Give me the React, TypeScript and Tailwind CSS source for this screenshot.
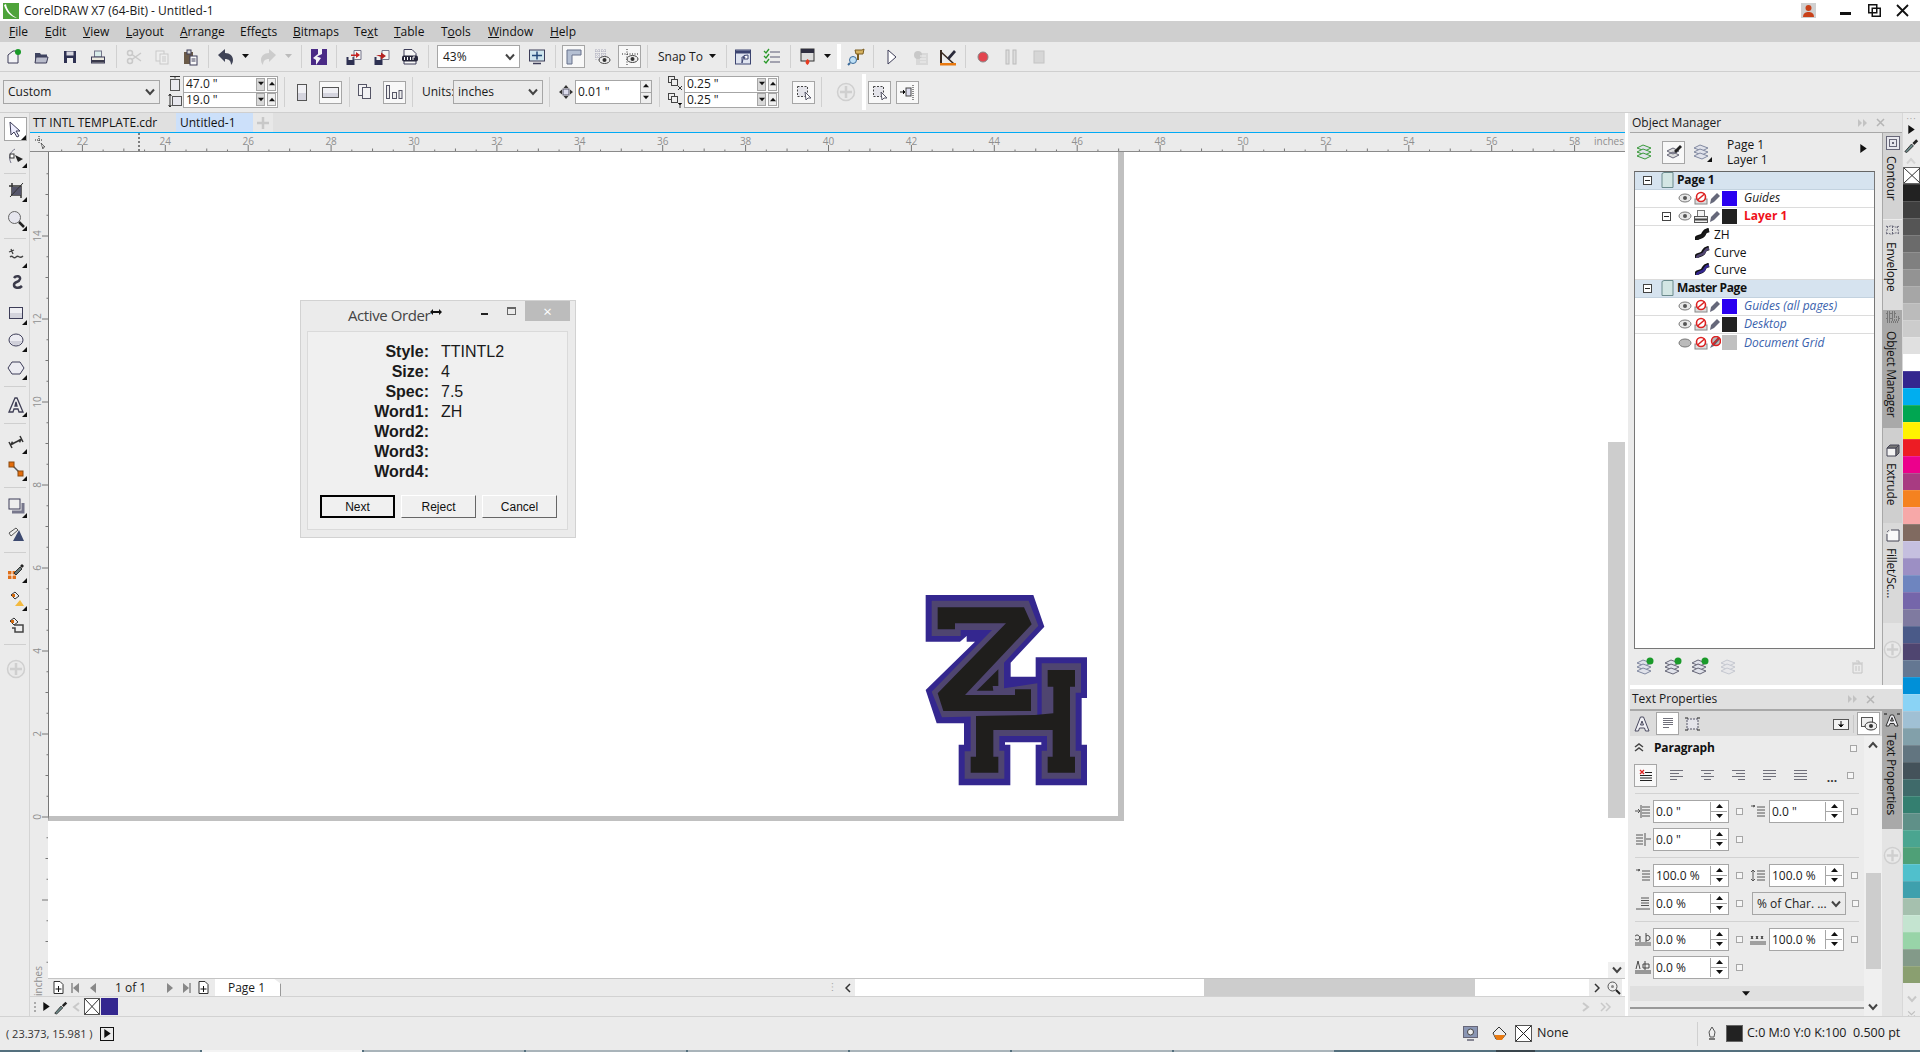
import React from "react";

type P = { children?: React.ReactNode; w?: number; h?: number; className?: string };
const S = ({ children, w = 18, h = 18, className }: P) => (
  <svg width={w} height={h} viewBox={`0 0 ${w} ${h}`} className={className} fill="none">{children}</svg>
);
const N = "#3d3d58";
const G = "#75758a";
const D = "#c9c9c9";
const Tri = ({ dir = "down", c = "#111", s = 7 }: { dir?: string; c?: string; s?: number }) => {
  const pts: Record<string, string> = { down: "0,1 7,1 3.5,5", up: "0,5 7,5 3.5,1", right: "1,0 6,3.5 1,7", left: "6,0 1,3.5 6,7" };
  return <svg width={s} height={s} viewBox="0 0 7 7"><polygon points={pts[dir]} fill={c} /></svg>;
};
const Corner = () => <svg width="5" height="5" viewBox="0 0 5 5" className="absolute right-0 bottom-0"><polygon points="5,0 5,5 0,5" fill="#111" /></svg>;

const INew = () => <S><path d="M3 7 L8 3 H13 V15 H3Z" fill="#f2f2f5" stroke={N} /><circle cx="13" cy="4" r="3" fill="#1a9a2a" /></S>;
const IOpen = () => <S><path d="M2 5h5l1 1.500h6V15H2Z" fill="#3f4460" /><path d="M3 9h12l-1.500 6H2Z" fill="#b9bccb" stroke={N} /></S>;
const ISave = () => <S><rect x="3" y="3" width="12" height="12" fill="#2e3152" /><rect x="5.500" y="3.500" width="7" height="4" fill="#d8d8e0" /><rect x="6" y="10" width="6" height="5" fill="#eee" /></S>;
const IPrint = () => <S><rect x="5.500" y="3" width="7" height="6" fill="#d9ecea" stroke={G} /><rect x="2.500" y="9" width="13" height="6" fill="#eceae0" stroke={N} /><rect x="3" y="12" width="12" height="2.500" fill="#3a3a4c" /></S>;
const ICut = () => <S><circle cx="5" cy="13" r="2.500" stroke={D} strokeWidth="1.500" /><circle cx="5" cy="5" r="2.500" stroke={D} strokeWidth="1.500" /><path d="M7 6.500 16 13M7 11.500 16 5" stroke={D} strokeWidth="1.500" /></S>;
const ICopy = () => <S><rect x="3" y="3" width="8" height="10" fill="#eee" stroke={D} /><rect x="7" y="6" width="8" height="10" fill="#eee" stroke={D} /><path d="M9 9h4M9 11h4M9 13h4" stroke={D} /></S>;
const IPaste = () => <S><rect x="3" y="4" width="9" height="12" fill="#6a5a48" /><rect x="6" y="2" width="4" height="4" fill="#d8d8d8" stroke={N} /><rect x="9" y="8" width="7" height="9" fill="#fafafa" stroke={N} /><path d="M10.500 11h4M10.500 13h4" stroke={N} /></S>;
const IUndo = ({ c = "#3f4356", flip = false }: { c?: string; flip?: boolean }) => (
  <svg width="18" height="18" viewBox="0 0 18 18" style={flip ? { transform: "scaleX(-1)" } : undefined}><path d="M1 7 8 1V5c5 0 8 3 8 7 0 2-1 4-2 5 0-4-2-6-6-6v3Z" fill={c} /></svg>
);
const ICorel = () => <S><rect x="1" y="1" width="16" height="16" fill="#4a2a86" /><path d="M12 1v5L7 8.500 11 10 6 17V12L3 10l5-4V1Z" fill="#f4f4f8" /></S>;
const IImp = ({ alt = false }: { alt?: boolean }) => (
  <S><rect x="1.500" y="9" width="8" height="8" fill="#2e3152" /><rect x="3.500" y="9" width="4" height="3" fill="#eee" /><path d="M9 2.500h7v9H9Z" fill="#f5f5f5" stroke={G} />
    {alt ? <path d="M3 7h5V4.500L13 8l-5 3.500V9" fill="#b32020" /> : <path d="M6 6.500h5V4l4 3-4 3V8H6Z" fill="#c52020" />}</S>
);
const IPdf = () => <S><path d="M3 1.500h8l4 4V16H3Z" fill="#f6f6f6" stroke={N} /><rect x="1" y="7.500" width="16" height="6" rx="2" fill="#26263a" /><path d="M3.500 9v3M6.500 9v3M9.500 9v3M12 9h2M12 9v3" stroke="#fff" /></S>;
const IFull = () => <S><rect x="1.500" y="2" width="15" height="11" fill="#cfe6ee" stroke={N} /><path d="M9 3.500v8M4 7.500h10" stroke="#234a7a" strokeWidth="1.500" /><path d="M5 15.500h8" stroke={N} strokeWidth="1.500" /></S>;
const IRuler = () => <S><path d="M2 2h14v5H7v9H2Z" fill="#b5c0d3" stroke="#66708a" /></S>;
const IEye = ({ x = 6, y = 8 }: { x?: number; y?: number }) => <g transform={`translate(${x} ${y})`}><ellipse cx="5.500" cy="4" rx="5.500" ry="3.500" fill="#eee" stroke="#444" /><circle cx="5.500" cy="4" r="2" fill="#333" /></g>;
const IGrid = () => <S><path d="M2 3h12M2 6h12M2 9h12M3 1v12M6 1v12M9 1v12M12 1v12" stroke="#aab" strokeDasharray="1 1" /><IEye /></S>;
const IGuide = () => <S><path d="M1 6h16M6 1v16" stroke="#222" strokeDasharray="1 1.500" /><IEye x={6} y={7} /></S>;
const IApp = () => <S><rect x="1.500" y="2" width="15" height="14" fill="#dfe4f0" stroke="#3c4470" /><rect x="2" y="2.500" width="14" height="3" fill="#3c4470" /><path d="M8 15V9h3l-1 2h4V7l-4 .500Z" fill="#fff" stroke="#3c4470" /></S>;
const ICheck = () => <S><path d="M7 4h10M7 9h10M7 14h10" stroke="#8a8a9c" strokeWidth="1.500" /><path d="M1 3l2 2 3-4M1 8l2 2 3-4M1 13l2 2 3-4" stroke="#2a9a2a" strokeWidth="1.300" /></S>;
const IFlash = () => <S><rect x="2" y="1" width="13" height="12" fill="#ddd" stroke="#333" /><rect x="2" y="1" width="13" height="4" fill="#2e2e40" /><path d="M8.500 11c2 1.500 3 3 0 6-3-2-2-4 0-6Z" fill="#e83a20" /></S>;
const IPin = () => <S><path d="M8 2h7l2-1-1 5H9Z" fill="#d6b260" stroke="#7a5c20" /><path d="M11 6v6" stroke="#7a5c20" strokeWidth="2" /><circle cx="6" cy="12" r="3.500" fill="#bfe0f5" stroke="#3a6a9a" /><path d="M3 15 1 17" stroke="#3a6a9a" strokeWidth="2" /></S>;
const IPlay = () => <S><path d="M5 2 L13 9 5 16Z" fill="#fff" stroke={N} /></S>;
const IMacro = () => <S><rect x="4" y="5" width="12" height="12" fill="#d8d8d8" /><circle cx="6" cy="7" r="4" fill="#c8c8c8" /><path d="M8 8h6M8 11h6M8 14h6" stroke="#eee" /></S>;
const ITri = () => <S><path d="M2 2V16H17" stroke="#3a2a20" strokeWidth="2" /><path d="M2 4 15 16H2Z" fill="none" stroke="#3a2a20" strokeWidth="1.500" /><path d="M8 10 15 2l2 2-7 8Z" fill="#2a2a3a" /><rect x="1" y="15" width="16" height="2.500" fill="#ea7a10" /></S>;
const IRec = () => <S><circle cx="9" cy="9" r="5" fill="#e3454f" stroke="#888" /></S>;
const IPause = () => <S><rect x="4" y="2" width="3" height="14" fill="#ddd" stroke="#bbb" /><rect x="11" y="2" width="3" height="14" fill="#ddd" stroke="#bbb" /></S>;
const IStop = () => <S><rect x="4" y="3" width="10" height="12" fill="#d6d6d6" stroke="#c4c4c4" /></S>;
const IPlus = ({ s = 20, c = "#cfcfcf" }: { s?: number; c?: string }) => (
  <svg width={s} height={s} viewBox="0 0 20 20"><circle cx="10" cy="10" r="8.500" fill="#e9e9e9" stroke={c} strokeWidth="1.500" /><path d="M10 4v12M4 10h12" stroke={c} strokeWidth="2.500" /></svg>
);
const Dropper = () => <S><path d="M2 16 9 8l2 2-7 7Z" fill="#6a8a8a" stroke="#333" /><path d="M10 7 14 3l2 2-4 4Z" fill="#222" /></S>;

const Slot = ({ className = "w-[28px]", children }: { className?: string; children?: React.ReactNode }) => (
  <div className={`flex items-center justify-center shrink-0 ${className}`}>{children}</div>
);
const Sep = ({ className = "h-[23px]" }: { className?: string }) => <div className={`w-px bg-[#d0d0d0] shrink-0 ${className}`} />;
const Box = ({ className = "", children }: { className?: string; children?: React.ReactNode }) => (
  <div className={`flex items-center justify-center shrink-0 w-[23px] h-[23px] border border-[#a6a6a6] bg-[#f8f8f8] ${className}`}>{children}</div>
);
const Chev = ({ c = "#444" }: { c?: string }) => <svg width="10" height="8" viewBox="0 0 10 8"><path d="M1 1.500 5 6 9 1.500" stroke={c} strokeWidth="2" fill="none" /></svg>;

const Spin2 = () => (
  <div className="flex gap-[2px] mr-[1px]">
    <div className="w-[9px] h-[13px] bg-[#d8d8d8] border border-[#a6a6a6] flex items-center justify-center"><Tri s={6} /></div>
    <div className="w-[9px] h-[13px] bg-[#eee] border border-[#a6a6a6] flex items-center justify-center"><Tri dir="up" s={6} /></div>
  </div>
);
const Double = ({ a, b, className = "" }: { a: string; b: string; className?: string }) => (
  <div className={`shrink-0 w-[95px] h-[32px] border border-[#a6a6a6] bg-white flex flex-col ${className}`}>
    {[a, b].map((t, i) => (
      <div key={i} className={`flex-1 flex items-center justify-between pl-[2px] ${i === 0 ? "border-b border-[#a6a6a6]" : ""}`}>
        <span>{t}</span><Spin2 />
      </div>
    ))}
  </div>
);

const menu: [string, string, string, string][] = [
  ["", "F", "ile", "w-[36px]"], ["", "E", "dit", "w-[38px]"], ["", "V", "iew", "w-[43px]"], ["", "L", "ayout", "w-[54px]"],
  ["", "A", "rrange", "w-[60px]"], ["Effe", "c", "ts", "w-[53px]"], ["", "B", "itmaps", "w-[61px]"], ["Te", "x", "t", "w-[40px]"],
  ["", "T", "able", "w-[47px]"], ["T", "o", "ols", "w-[47px]"], ["", "W", "indow", "w-[62px]"], ["", "H", "elp", "w-[40px]"],
];

const HRuler = () => {
  const ticks = [];
  for (let v = 20; v <= 60; v += 0.5) {
    const x = 52.4 + (v - 22) * 41.45;
    if (x < 18 || x > 1555) continue;
    const major = v % 2 === 0;
    const odd = v % 1 === 0;
    ticks.push(<line key={v} x1={x} x2={x} y1={major ? 12 : odd ? 15.5 : 16.5} y2={18} stroke="#777" />);
    if (major) ticks.push(<text key={`t${v}`} x={x} y={11.5} textAnchor="middle" fontSize="10" fill="#8f8f8f" fontFamily="'Open Sans',sans-serif">{v}</text>);
  }
  return (
    <svg width="1595" height="18" viewBox="0 0 1595 18" className="block">
      {ticks}
      <text x="1564" y="12" fontSize="10" fill="#8f8f8f" fontFamily="'Open Sans',sans-serif">inches</text>
      <line x1="109" x2="109" y1="0" y2="18" stroke="#111" strokeDasharray="2 2" />
      <path d="M5 7h8M9 3v8" stroke="#222" strokeDasharray="1 1" />
      <path d="M11 10l4 4-2 0 0 2Z" fill="#fff" stroke="#222" strokeWidth=".6" />
    </svg>
  );
};
const VRuler = () => {
  const t = [];
  for (let v = -4; v <= 18; v += 0.5) {
    const y = 84 + (14 - v) * 41.5;
    if (y < 2 || y > 815) continue;
    const major = v % 2 === 0;
    const odd = v % 1 === 0;
    t.push(<line key={v} y1={y} y2={y} x1={major ? 12 : odd ? 15.5 : 16.5} x2={18} stroke="#777" />);
    if (major && v >= 0 && v <= 14) t.push(<text key={`t${v}`} transform={`translate(11 ${y}) rotate(-90)`} textAnchor="middle" fontSize="10" fill="#8f8f8f" fontFamily="'Open Sans',sans-serif">{v}</text>);
  }
  return (
    <svg width="18" height="846" viewBox="0 0 18 846" className="block">
      {t}
      <text transform="translate(12 844) rotate(-90)" fontSize="10" fill="#8f8f8f" fontFamily="'Open Sans',sans-serif">inches</text>
    </svg>
  );
};

const T1 = () => <S><path d="M3 2l1 13 3-3 3 5 2-1-3-5h4Z" fill="#eef" stroke={N} /></S>;

const ToolBtn = ({ className = "", corner = true, children }: { className?: string; corner?: boolean; children?: React.ReactNode }) => (
  <div className={`relative flex items-center justify-center w-[23px] h-[24px] ml-[4px] shrink-0 ${className}`}>
    {children}{corner && <Corner />}
  </div>
);
const TSep = ({ className = "" }: { className?: string }) => <div className={`h-px w-[22px] ml-[4px] bg-[#cfcfcf] shrink-0 ${className}`} />;

const Toolbox = () => (
  <div className="w-[30px] shrink-0 border-r border-[#d4d4d4] flex flex-col bg-[#ebebeb] pt-[4px]">
    <ToolBtn className="bg-white border border-[#a6a6a6] h-[23px]"><T1 /></ToolBtn>
    <ToolBtn className="mt-[3px]"><S><path d="M4 16C1 10 3 5 8 2" stroke={G} /><rect x="3" y="7" width="4" height="4" fill="#fff" stroke="#333" /><path d="M8 8l8 4-5 3Z" fill="#222" /></S></ToolBtn>
    <TSep className="mt-[5px]" />
    <ToolBtn className="mt-[4px]"><S><path d="M3 5h11v9H4M5 2v12M2 5h3M14 5v12" stroke="#333" strokeWidth="1.500" /><rect x="5" y="6" width="9" height="8" fill="#55556a" /><path d="M3 16 16 2" stroke="#333" /></S></ToolBtn>
    <ToolBtn className="mt-[5px]"><S><circle cx="7.500" cy="7.500" r="6" fill="#e6e6ee" stroke="#666" /><path d="M12 12l5 5" stroke="#222" strokeWidth="2.500" /></S></ToolBtn>
    <TSep className="mt-[7px]" />
    <ToolBtn className="mt-[5px]"><S><path d="M2 5 7 3M4 2l2 5M3 10c3-3 3 3 6 0s3 3 7-1" stroke="#444" strokeWidth="1.300" /></S></ToolBtn>
    <ToolBtn className="mt-[2px]" corner={false}><S><path d="M7 5c2-3 7-2 6 1-1 4-6 2-6 6 0 3 5 4 8 1" stroke="#3a3a4a" strokeWidth="2.500" /></S></ToolBtn>
    <ToolBtn className="mt-[7px]"><S><rect x="2.500" y="3.500" width="13" height="11" fill="#eeeef2" stroke={N} /><rect x="3" y="9" width="12" height="5" fill="#d3d3dc" /></S></ToolBtn>
    <ToolBtn className="mt-[3px]"><S><ellipse cx="9" cy="9" rx="7" ry="6" fill="#ececf2" stroke={N} /><path d="M3 10h12c-1 3-3 4-6 4s-5-1-6-4Z" fill="#d0d0da" /></S></ToolBtn>
    <ToolBtn className="mt-[4px]"><S><path d="M5 3h8l4 6-4 6H5L1 9Z" fill="#ececf2" stroke={N} /></S></ToolBtn>
    <TSep className="mt-[6px]" />
    <ToolBtn className="mt-[6px]"><S><path d="M2 16 8 2h2l6 14h-4l-1-3H7l-1 3ZM8 10h2L9 6Z" fill="#eee" stroke="#3f3f55" strokeWidth="1.300" /></S></ToolBtn>
    <TSep className="mt-[6px]" />
    <ToolBtn className="mt-[6px]"><S><path d="M3 12 15 6M2 9l3 6M13 3l3 6" stroke="#333" strokeWidth="1.500" /><path d="M3 12l4-1-2-3ZM15 6l-4 1 2 3Z" fill="#333" /></S></ToolBtn>
    <ToolBtn className="mt-[3px]"><S><path d="M5 5 13 13" stroke="#555" strokeWidth="1.500" /><rect x="2" y="2" width="5" height="5" fill="#e46c0a" stroke="#8a4a10" /><rect x="11" y="11" width="5" height="5" fill="#e46c0a" stroke="#8a4a10" /></S></ToolBtn>
    <TSep className="mt-[6px]" />
    <ToolBtn className="mt-[6px]"><S><rect x="2" y="2" width="11" height="10" fill="#eee" stroke={N} /><path d="M5 15h11V6" stroke="#77778c" strokeWidth="3" /></S></ToolBtn>
    <ToolBtn className="mt-[4px]" corner={false}><S><path d="M2 8 9 3l2 2-7 6Z" fill="#eee" stroke="#555" /><path d="M6 16l6-11 5 11Z" fill="#3d4a70" /></S></ToolBtn>
    <TSep className="mt-[6px]" />
    <ToolBtn className="mt-[6px]"><S><rect x="1" y="9" width="8" height="8" fill="#e0701a" /><path d="M1 13h8M5 9v8" stroke="#fff" /><path d="M7 11 13 5l2 2-6 6Z" fill="#6a7a7a" stroke="#333" /><path d="M13 4l2-2 2 2-2 2Z" fill="#222" /></S></ToolBtn>
    <ToolBtn className="mt-[4px]"><S><path d="M4 5l4-3 4 4-4 3Z" fill="#eee" stroke="#333" /><rect x="5" y="4" width="3" height="3" fill="#d06a10" /><path d="M8 16l5-6 4 6Z" fill="#f3b93e" /></S></ToolBtn>
    <ToolBtn className="mt-[2px]" corner={false}><S><path d="M3 5l4-3 4 4-4 3Z" fill="#eee" stroke="#333" /><rect x="4" y="4" width="3" height="3" fill="#d06a10" /><path d="M7 9h9v7H8v-4H5" stroke="#444" strokeWidth="1.500" fill="#eee" /></S></ToolBtn>
    <TSep className="mt-[7px]" />
    <div className="ml-[6px] mt-[14px]"><IPlus /></div>
  </div>
);

const Tabs = () => (
  <div className="h-[20px] shrink-0 bg-[#e0e0e0] border-b border-[#00aaf5] flex items-stretch text-[#111]">
    <div className="w-[146px] pl-[3px] flex items-center">TT INTL TEMPLATE.cdr</div>
    <div className="w-[77px] pl-[4px] flex items-center bg-[#cce0fa]">Untitled-1</div>
    <div className="w-[20px] flex items-center justify-center bg-[#e8e8e8]"><svg width="12" height="12" viewBox="0 0 12 12"><path d="M6 0v12M0 6h12" stroke="#c8c8c8" strokeWidth="2.500" /></svg></div>
  </div>
);

const Logo = () => (
  <svg width="230" height="220" viewBox="0 0 690 660" className="absolute left-[852px] top-[428px]">
    <polygon fill="#34278f" points="77,45 400,45 433,140 332,248 332,290 407,290 407,232 561,232 561,354 545,354 545,494 561,494 561,616 407,616 407,494 424,494 424,487 315,487 315,494 331,494 331,616 176,616 176,494 192,494 192,430 110,430 77,330 225,185 200,185 200,168 180,185 77,185" />
    <polygon fill="#4f4570" points="95,62 386,62 415,137 312,248 312,325 412,310 412,405 126,412 95,335 276,150 182,150 182,168 95,168" />
    <polygon fill="#4f4570" points="194,596 194,514 212,514 212,405 425,405 425,340 425,250 543,250 543,338 527,338 527,512 543,512 543,596 425,596 425,512 441,512 441,468 298,468 298,512 313,512 313,596" />
    <polygon fill="#1f1e1c" points="113,82 372,82 395,133 195,345 345,345 345,328 393,328 393,393 130,393 113,340 318,130 165,130 165,148 113,148" />
    <polygon fill="#1f1e1c" points="212,578 212,530 228,530 228,408 405,405 460,400 460,320 443,320 443,270 525,270 525,320 510,320 510,530 525,530 525,578 443,578 443,530 458,530 458,450 280,450 280,530 295,530 295,578" />
    <polygon fill="#1f1e1c" points="230,332 295,268 295,318 278,318 280,332" />
  </svg>
);

const Dialog = () => (
  <div className="absolute left-[252px] top-[148px] w-[276px] h-[238px] border border-[#d2d2d2] bg-[#ebebeb] flex flex-col font-['Liberation_Sans',sans-serif]">
    <div className="relative h-[30px] shrink-0 font-['Open_Sans',sans-serif] text-[15px] text-[#444]">
      <div className="flex h-full">
        <span className="ml-[47px] mt-[7px] tracking-[-0.4px] w-[84px] whitespace-nowrap">Active Order</span>
        <svg width="12" height="8" viewBox="0 0 12 8" className="mt-[7px] -ml-[2px]"><path d="M0 4 3 1v2h6V1l3 3-3 3V5H3v2Z" fill="#111" /></svg>
        <div className="w-[7px] h-[2px] bg-[#222] ml-[39px] mt-[12px]" />
        <div className="w-[9px] h-[8px] border border-[#666] border-t-2 ml-[19px] mt-[6px]" />
        <div className="w-[45px] h-[20px] bg-[#bcbcbc] ml-[9px] flex items-center justify-center text-white text-[15px] leading-none">×</div>
      </div>
    </div>
    <div className="ml-[6px] w-[261px] h-[199px] border border-[#dadada] bg-[#f0f0f0] flex flex-col">
      <div className="pt-[10px] text-[16px] leading-[20px] text-[#1a1a1a]">
        {[["Style", "TTINTL2"], ["Size", "4"], ["Spec", "7.5"], ["Word1", "ZH"], ["Word2", ""], ["Word3", ""], ["Word4", ""]].map(([a, b]) => (
          <div key={a} className="flex h-[20px]">
            <div className="w-[121px] text-right font-bold">{a}:</div>
            <div className="ml-[12px]">{b}</div>
          </div>
        ))}
      </div>
      <div className="flex gap-[6px] ml-[12px] mt-[13px] text-[12px] text-[#111]">
        <div className="w-[75px] h-[23px] border-2 border-black bg-[#f0f0f0] flex items-center justify-center">Next</div>
        <div className="w-[75px] h-[23px] border border-[#fff] border-r-[#666] border-b-[#666] bg-[#f0f0f0] flex items-center justify-center">Reject</div>
        <div className="w-[75px] h-[23px] border border-[#fff] border-r-[#666] border-b-[#666] bg-[#f0f0f0] flex items-center justify-center">Cancel</div>
      </div>
    </div>
  </div>
);

const PageAdd = () => <svg width="11" height="13" viewBox="0 0 11 13"><path d="M1 .500h6l3 3v9H1Z" fill="#fff" stroke="#333" /><path d="M5.500 5v6M2.500 8h6" stroke="#111" /></svg>;
const NavBar = () => (
  <div className="h-[18px] shrink-0 flex items-stretch bg-[#ebebeb] border-t border-[#c4c4c4]">
    <Slot className="w-[20px]"><PageAdd /></Slot>
    <Slot className="w-[16px] ml-[-1px]"><svg width="9" height="10" viewBox="0 0 9 10"><path d="M1 0v10" stroke="#888" strokeWidth="1.500" /><polygon points="8,0 8,10 2,5" fill="#888" /></svg></Slot>
    <Slot className="w-[20px]"><svg width="7" height="10" viewBox="0 0 7 10"><polygon points="6,0 6,10 0,5" fill="#888" /></svg></Slot>
    <div className="w-[56px] flex items-center pl-[12px]">1 of 1</div>
    <Slot className="w-[20px]"><svg width="7" height="10" viewBox="0 0 7 10"><polygon points="1,0 1,10 7,5" fill="#888" /></svg></Slot>
    <Slot className="w-[14px]"><svg width="9" height="10" viewBox="0 0 9 10"><path d="M8 0v10" stroke="#888" strokeWidth="1.500" /><polygon points="1,0 1,10 7,5" fill="#888" /></svg></Slot>
    <Slot className="w-[20px]"><PageAdd /></Slot>
    <div className="w-[66px] ml-[2px] bg-white border-r border-[#999] flex items-center justify-center pr-[2px] [clip-path:polygon(0_0,90%_0,100%_30%,100%_100%,0_100%)]">Page 1</div>
    <div className="w-[556px] flex items-center justify-end"><span className="text-[#999] text-[9px] leading-none tracking-[1px] rotate-90">···</span></div>
    <Slot className="w-[14px] ml-[4px]"><svg width="6" height="10" viewBox="0 0 6 10"><path d="M5 1 1 5l4 4" stroke="#333" strokeWidth="1.500" fill="none" /></svg></Slot>
    <div className="flex-1 bg-white flex">
      <div className="w-[349px]" />
      <div className="w-[271px] bg-[#cdcdcd]" />
      <div className="flex-1" />
    </div>
    <Slot className="w-[16px]"><svg width="6" height="10" viewBox="0 0 6 10"><path d="M1 1l4 4-4 4" stroke="#333" strokeWidth="1.500" fill="none" /></svg></Slot>
    <Slot className="w-[17px]"><svg width="14" height="14" viewBox="0 0 14 14"><circle cx="5.500" cy="5.500" r="4.500" fill="#eee" stroke="#555" /><circle cx="5.500" cy="5.500" r="1.500" fill="#888" /><path d="M9 9l4 4" stroke="#222" strokeWidth="2" /></svg></Slot>
    <div className="w-[3px] bg-white" />
  </div>
);

const PaletteBar = () => (
  <div className="h-[20px] shrink-0 flex items-center bg-[#ebebeb] border-t border-[#d2d2d2]">
    <div className="ml-[4px] w-[3px] h-[10px] border-l-2 border-dotted border-[#aaa]" />
    <Slot className="w-[14px] ml-[2px]"><Tri dir="right" s={9} /></Slot>
    <Slot className="w-[16px]"><Dropper /></Slot>
    <Slot className="w-[14px]"><svg width="8" height="10" viewBox="0 0 8 10"><path d="M7 1 2 5l5 4" stroke={D} strokeWidth="2" fill="none" /></svg></Slot>
    <div className="w-[16px] h-[17px] border border-[#555] bg-white ml-[1px]"><svg width="14" height="15" viewBox="0 0 14 15"><path d="M0 0 14 15M14 0 0 15" stroke="#333" /></svg></div>
    <div className="w-[17px] h-[17px] bg-[#34278f] ml-[1px]" />
    <div className="flex-1" />
    <svg width="8" height="10" viewBox="0 0 8 10"><path d="M1 1l5 4-5 4" stroke={D} strokeWidth="2" fill="none" /></svg>
    <svg width="12" height="10" viewBox="0 0 12 10" className="ml-[10px] mr-[13px]"><path d="M1 1l4 4-4 4M6 1l4 4-4 4" stroke={D} strokeWidth="1.500" fill="none" /></svg>
  </div>
);

const Mini = ({ c = "#1a1a1a" }: { c?: string }) => <svg width="16" height="14" viewBox="0 0 16 14"><path d="M1 12c0-4 5-2 7-5s1-4 6-5" stroke="#111" strokeWidth="4.500" fill="none" /><path d="M2 12c0-4 5-2 7-5s1-4 5-4.500" stroke={c} strokeWidth="2.500" fill="none" /></svg>;
const MinusBox = () => <div className="w-[9px] h-[9px] border border-[#444] bg-white flex items-center justify-center shrink-0"><div className="w-[5px] h-px bg-[#222]" /></div>;
const EyeS = ({ off = false }: { off?: boolean }) => <svg width="14" height="10" viewBox="0 0 14 10"><ellipse cx="7" cy="5" rx="6" ry="4" fill={off ? "#bbb" : "#e8e8e8"} stroke="#777" />{!off && <circle cx="7" cy="5" r="2" fill="#555" />}</svg>;
const NoPrint = () => <svg width="14" height="14" viewBox="0 0 14 14"><rect x="1" y="8" width="12" height="5" fill="#ddd" stroke="#888" /><circle cx="7" cy="6" r="4.500" fill="#fff" stroke="#d22" strokeWidth="1.600" /><path d="M3.500 9 10.500 3" stroke="#d22" strokeWidth="1.600" /></svg>;
const PrintS = () => <svg width="14" height="13" viewBox="0 0 14 13"><rect x="3.500" y=".500" width="7" height="6" fill="#f4f4f4" stroke="#777" /><rect x=".500" y="6.500" width="13" height="6" fill="#eee" stroke="#555" /><rect x="1" y="8.500" width="12" height="2" fill="#444" /></svg>;
const Pen = () => <svg width="12" height="13" viewBox="0 0 12 13"><path d="M1 12 2 7l6-6 3 3-6 6Z" fill="#66687a" /></svg>;
const PenOff = () => <svg width="12" height="13" viewBox="0 0 12 13"><path d="M1 12 3 8l6-7 2 2-6 7Z" fill="#66687a" /><circle cx="7" cy="5" r="4.500" fill="#555" fillOpacity=".4" stroke="#d22" strokeWidth="1.500" /><path d="M4 8l6-6" stroke="#d22" strokeWidth="1.500" /></svg>;
const PageI = () => <svg width="13" height="16" viewBox="0 0 13 16"><path d="M1 1.500 3 .500h9v15H1Z" fill="#d3e6e4" stroke="#6a8a8c" /></svg>;

const TreeRow = ({ head = false, children }: { head?: boolean; children?: React.ReactNode }) => (
  <div className={`h-[18px] flex items-center shrink-0 border-b pb-[1px] ${head ? "bg-[#d6e3ef] border-[#c3d2df]" : "bg-white border-[#dcdcdc]"}`}>{children}</div>
);
const Vis = ({ eye, print, pen, color }: { eye?: boolean; print?: boolean; pen?: boolean; color: string }) => (
  <>
    <div className="ml-[43px] w-[14px] flex justify-center"><EyeS off={!eye} /></div>
    <div className="ml-[1px] w-[15px] flex justify-center">{print ? <PrintS /> : <NoPrint />}</div>
    <div className="ml-[1px] w-[12px] flex justify-center">{pen ? <Pen /> : <PenOff />}</div>
    <div className="w-[15px] h-[15px] ml-[1px]" style={{ background: color }} />
  </>
);
const italic = "ml-[7px] italic text-[#3a62ad] whitespace-nowrap";

const Tree = () => (
  <div className="mx-[4px] w-[241px] h-[478px] border border-[#777] border-t-[#666] bg-white flex flex-col shrink-0 text-[#111]">
    <TreeRow head><div className="ml-[8px]"><MinusBox /></div><div className="ml-[9px]"><PageI /></div><span className="ml-[3px] font-bold tracking-[-0.2px]">Page 1</span></TreeRow>
    <TreeRow><Vis eye pen color="#2a00f0" /><span className="ml-[7px] italic text-[#222]">Guides</span></TreeRow>
    <TreeRow>
      <div className="ml-[27px]"><MinusBox /></div>
      <div className="ml-[7px] w-[14px] flex justify-center"><EyeS /></div>
      <div className="ml-[1px] w-[15px] flex justify-center"><PrintS /></div>
      <div className="ml-[1px] w-[12px] flex justify-center"><Pen /></div>
      <div className="w-[15px] h-[15px] ml-[1px] bg-[#222]" />
      <span className="ml-[7px] font-bold text-[#f0101a]">Layer 1</span>
    </TreeRow>
    <div className="h-[18px] flex items-center shrink-0 pb-[1px]"><div className="ml-[60px]"><Mini /></div><span className="ml-[3px]">ZH</span></div>
    <div className="h-[18px] flex items-center shrink-0 pb-[1px]"><div className="ml-[60px]"><Mini c="#4f4570" /></div><span className="ml-[3px]">Curve</span></div>
    <TreeRow><div className="ml-[60px]"><Mini c="#34278f" /></div><span className="ml-[3px]">Curve</span></TreeRow>
    <TreeRow head><div className="ml-[8px]"><MinusBox /></div><div className="ml-[9px]"><PageI /></div><span className="ml-[3px] font-bold tracking-[-0.4px]">Master Page</span></TreeRow>
    <TreeRow><Vis eye pen color="#2a00f0" /><span className={italic}>Guides (all pages)</span></TreeRow>
    <TreeRow><Vis eye pen color="#222" /><span className={italic}>Desktop</span></TreeRow>
    <div className="h-[18px] flex items-center shrink-0 pb-[1px]"><Vis color="#c0c0c0" /><span className={italic}>Document Grid</span></div>
  </div>
);

const LayersI = ({ c = "#8088a0", add = false, dim = false }: { c?: string; add?: boolean; dim?: boolean }) => (
  <svg width="20" height="20" viewBox="0 0 20 20" opacity={dim ? .35 : 1}>
    <path d="M2 6 8 3l8 3-6 3Z" fill="#e0e2ea" stroke={c} /><path d="M2 10l6-3 8 3-6 3Z" fill="#e0e2ea" stroke={c} /><path d="M2 14l6-3 8 3-6 3Z" fill="#e0e2ea" stroke={c} />
    {add && <circle cx="15" cy="4" r="3.500" fill="#1a9a2a" />}
  </svg>
);

const VTab = ({ cls, icon, label }: { cls: string; icon: React.ReactNode; label: string }) => (
  <div className={`shrink-0 flex flex-col items-center ${cls}`}>
    {icon}
    <span className="mt-[6px] -ml-[3px] [writing-mode:vertical-rl] whitespace-nowrap leading-[20px] tracking-[-0.2px]">{label}</span>
  </div>
);

const ObjectPanel = () => (
  <div className="h-[572px] shrink-0 flex flex-col">
    <div className="h-[20px] shrink-0 bg-[#e6e6e6] border-b border-[#a8a8a8] flex items-center pl-[2px] pr-[5px]">
      <span className="flex-1">Object Manager</span>
      <svg width="10" height="8" viewBox="0 0 10 8" className="mr-[8px]"><path d="M0 0l4 4-4 4ZM5 0l4 4-4 4Z" fill="#c3c3c3" /></svg>
      <svg width="9" height="9" viewBox="0 0 9 9" className="mr-[12px]"><path d="M1 1l7 7M8 1 1 8" stroke="#b5b5b5" strokeWidth="1.500" /></svg>
    </div>
    <div className="flex-1 flex min-h-0">
      <div className="w-[252px] shrink-0 flex flex-col">
        <div className="h-[38px] shrink-0 flex items-center">
          <Slot className="w-[20px] ml-[5px]"><LayersI c="#3a9a3a" /></Slot>
          <Box className="ml-[7px]"><svg width="18" height="18" viewBox="0 0 18 18"><path d="M2 8l6-3 6 3-6 3ZM2 12l6-3 6 3-6 3Z" fill="#ddd" stroke="#667" /><path d="M9 8l6-6 2 2-6 6Z" fill="#222" /></svg></Box>
          <Slot className="relative w-[20px] ml-[7px]"><LayersI /><Corner /></Slot>
          <div className="ml-[15px] leading-[15px] text-[#111] mt-[-1px]"><div>Page 1</div><div>Layer 1</div></div>
          <div className="flex-1" />
          <div className="mr-[14px] mt-[-8px]"><Tri dir="right" s={9} /></div>
        </div>
        <Tree />
        <div className="flex-1 flex items-center">
          <Slot className="w-[20px] ml-[5px]"><LayersI add /></Slot>
          <Slot className="w-[20px] ml-[8px]"><LayersI add c="#667" /></Slot>
          <Slot className="w-[20px] ml-[7px]"><LayersI add c="#667" /></Slot>
          <Slot className="w-[20px] ml-[9px]"><LayersI dim /></Slot>
          <div className="flex-1" />
          <svg width="13" height="14" viewBox="0 0 13 14" className="mr-[18px]"><path d="M2 4h9v9H2ZM1 3h11M5 1h3v2M5 6v5M8 6v5" stroke="#c4c4c4" fill="none" /></svg>
        </div>
      </div>
      <div className="w-[20px] shrink-0 flex flex-col bg-[#e4e4e4] border-l border-[#a8a8a8] text-[#111]">
        <VTab cls="h-[86px] bg-[#d3d3d3] pt-[3px]" icon={<svg width="14" height="14" viewBox="0 0 14 14"><rect x=".500" y=".500" width="13" height="13" fill="#e8e8ee" stroke="#667" /><rect x="3.500" y="3.500" width="7" height="7" fill="none" stroke="#667" /><rect x="6" y="6" width="2" height="2" fill="#667" /></svg>} label="Contour" />
        <VTab cls="h-[91px] bg-[#dcdcdc] border-t border-[#ececec] pt-[4px]" icon={<svg width="15" height="12" viewBox="0 0 15 12"><path d="M1 2c3 2 4-1 6.500 0S12 4 14 2M1 10c3-2 4 1 6.500 0S12 8 14 10M2 2c2 3-2 5 0 8M7.500 2v8M13 2c-2 3 2 5 0 8" stroke="#667" strokeDasharray="2 1" fill="none" /></svg>} label="Envelope" />
        <VTab cls="h-[118px] bg-[#a9a9a9] pt-[1px]" icon={<svg width="14" height="14" viewBox="0 0 14 14"><path d="M1 1h3v3H1ZM6 1h3v3H6ZM1 6h3v3H1ZM6 6h7v3H6ZM1 11h12" stroke="#444" strokeDasharray="1 1" fill="none" /></svg>} label="Object Manager" />
        <VTab cls="h-[95px] bg-[#cfcfcf] pt-[16px]" icon={<svg width="14" height="13" viewBox="0 0 14 13"><path d="M1 4h9v8H1Z" fill="#f4f4f4" stroke="#445" /><path d="M1 4l3-3h9l-3 3ZM10 4l3-3v8l-3 3Z" fill="#777" stroke="#445" /></svg>} label="Extrude" />
        <VTab cls="h-[100px] bg-[#d9d9d9] pt-[6px]" icon={<svg width="14" height="13" viewBox="0 0 14 13"><path d="M5 1h8v11H1V5" fill="#fafafa" stroke="#445" /><path d="M1 3 3 1" stroke="#445" strokeDasharray="1 1" /></svg>} label="Fillet/Sc..." />
        <div className="flex-1 flex justify-center pt-[17px]"><IPlus s={19} /></div>
      </div>
    </div>
  </div>
);

const Chk = ({ className = "" }: { className?: string }) => <div className={`w-[7px] h-[7px] border border-[#a6a6a6] bg-[#f6f6f6] shrink-0 ${className}`} />;
const Field = ({ v, className = "w-[76px]" }: { v: string; className?: string }) => (
  <div className={`h-[23px] shrink-0 border border-[#a6a6a6] bg-white flex items-stretch ${className}`}>
    <div className="flex-1 pl-[2px] flex items-center whitespace-nowrap">{v}</div>
    <div className="w-[17px] my-[1px] mr-[1px] flex flex-col border-l border-[#a6a6a6]">
      <div className="flex-1 flex items-center justify-center border-b border-[#a6a6a6]"><Tri dir="up" s={7} /></div>
      <div className="flex-1 flex items-center justify-center"><Tri s={7} /></div>
    </div>
  </div>
);
const Lines = ({ pts }: { pts: [number, number, number][] }) => (
  <svg width="14" height="13" viewBox="0 0 14 13">{pts.map(([y, a, b], i) => <line key={i} y1={y + .5} y2={y + .5} x1={a} x2={b} stroke="#70707a" />)}</svg>
);
const Q = ({ d }: { d: string }) => <svg width="16" height="14" viewBox="0 0 16 14"><path d={d} stroke="#555" fill="none" /><path d="M7 2h8M7 5h8M7 8h8M7 11h8" stroke="#555" /></svg>;
const Sp = () => <div className="h-px bg-[#d2d2d2] mt-[6px] ml-[5px] w-[224px] shrink-0" />;
const LBL = ({ children }: { children: React.ReactNode }) => <div className="w-[18px] ml-[4px] shrink-0 flex justify-center">{children}</div>;
const LBR = ({ children }: { children: React.ReactNode }) => <div className="w-[18px] ml-[6px] mr-[2px] shrink-0 flex justify-center">{children}</div>;

const TextPanel = () => (
  <div className="flex-1 min-h-0 flex flex-col">
    <div className="h-[20px] shrink-0 bg-[#e0e0e0] flex items-center pl-[2px]">
      <span className="flex-1">Text Properties</span>
      <svg width="10" height="8" viewBox="0 0 10 8" className="mr-[8px]"><path d="M0 0l4 4-4 4ZM5 0l4 4-4 4Z" fill="#c3c3c3" /></svg>
      <svg width="9" height="9" viewBox="0 0 9 9" className="mr-[27px]"><path d="M1 1l7 7M8 1 1 8" stroke="#b5b5b5" strokeWidth="1.500" /></svg>
    </div>
    <div className="flex-1 flex min-h-0">
      <div className="w-[252px] shrink-0 flex flex-col border-t-2 border-[#a8a8a8]">
        <div className="h-[25px] shrink-0 bg-[#dcdcdc] flex items-center">
          <Slot className="w-[18px] ml-[3px]"><svg width="16" height="16" viewBox="0 0 16 16"><path d="M1 15 6.500 1h3L15 15h-3.500l-1-3h-5l-1 3ZM6.500 9h3L8 5Z" fill="#f0f0f4" stroke="#4a4a60" /></svg></Slot>
          <Box className="ml-[5px] bg-white"><Lines pts={[[1, 2, 12], [3, 2, 12], [5, 2, 12], [7, 2, 12], [10, 2, 8]]} /></Box>
          <Slot className="w-[17px] ml-[5px]"><svg width="15" height="14" viewBox="0 0 15 14"><rect x="2" y="2" width="11" height="10" fill="#e4e4ea" stroke="#556" strokeDasharray="2 1" /><path d="M0 1h3M0 13h3M12 1h3M12 13h3" stroke="#222" /></svg></Slot>
          <div className="flex-1" />
          <Slot className="w-[16px]"><svg width="16" height="13" viewBox="0 0 16 13"><rect x=".500" y="2.500" width="15" height="10" fill="#f2f2f2" stroke="#555" /><path d="M8 4v6M5.500 7.500 8 10l2.500-2.500" stroke="#111" /></svg></Slot>
          <div className="w-px h-[18px] bg-[#c8c8c8] ml-[4px]" />
          <Box className="ml-[3px] mr-[2px] w-[22px] bg-white"><svg width="16" height="14" viewBox="0 0 16 14"><rect x=".500" y=".500" width="11" height="9" fill="#eee" stroke="#555" /><ellipse cx="10" cy="9" rx="6" ry="4" fill="#eee" stroke="#333" /><circle cx="10" cy="9" r="2" fill="#333" /></svg></Box>
        </div>
        <div className="flex-1 min-h-0 flex">
          <div className="w-[234px] shrink-0 flex flex-col overflow-hidden">
            <div className="h-[24px] shrink-0 flex items-center">
              <svg width="10" height="10" viewBox="0 0 10 10" className="ml-[4px]"><path d="M1 4l4-3 4 3M1 8l4-3 4 3" stroke="#444" strokeWidth="1.500" fill="none" /></svg>
              <span className="ml-[10px] font-bold text-[#111] flex-1 tracking-[-0.2px]">Paragraph</span>
              <Chk className="mr-[7px]" />
            </div>
            <div className="h-[23px] mt-[4px] shrink-0 flex items-center">
              <Box className="ml-[4px]"><svg width="14" height="14" viewBox="0 0 14 14"><path d="M1 1l4 4M5 1 1 5" stroke="#e02020" strokeWidth="1.300" /><path d="M6 3.500h7M1 6.500h12M1 9h12M1 11.500h12" stroke="#222" /></svg></Box>
              <Slot className="w-[14px] ml-[13px]"><Lines pts={[[1, 0, 13], [4, 0, 9], [7, 0, 13], [10, 0, 7]]} /></Slot>
              <Slot className="w-[14px] ml-[17px]"><Lines pts={[[1, 0, 13], [4, 3, 10], [7, 0, 13], [10, 3, 10]]} /></Slot>
              <Slot className="w-[14px] ml-[17px]"><Lines pts={[[1, 0, 13], [4, 4, 13], [7, 0, 13], [10, 6, 13]]} /></Slot>
              <Slot className="w-[14px] ml-[17px]"><Lines pts={[[1, 0, 13], [4, 0, 13], [7, 0, 13], [10, 0, 8]]} /></Slot>
              <Slot className="w-[14px] ml-[17px]"><Lines pts={[[1, 0, 13], [4, 0, 13], [7, 0, 13], [10, 0, 13]]} /></Slot>
              <span className="ml-[17px] w-[14px] text-center text-[#333] font-bold leading-none mt-[5px]">...</span>
              <Chk className="ml-[8px]" />
            </div>
            <Sp />
            <div className="h-[23px] mt-[6px] shrink-0 flex items-center">
              <LBL><Q d="M0 6h5M3 4l2 2-2 2M6 0v13" /></LBL><div className="w-px" /><Field v={'0.0 "'} /><Chk className="ml-[7px]" />
              <LBR><Q d="M1 1h4M3 0l2 1-2 1" /></LBR><Field v={'0.0 "'} className="w-[75px]" /><Chk className="ml-[7px]" />
            </div>
            <div className="h-[23px] mt-[5px] shrink-0 flex items-center">
              <LBL><svg width="16" height="14" viewBox="0 0 16 14"><path d="M1 2h7M1 5h7M1 8h7M1 11h7M10 0v13M11 6h5" stroke="#555" /></svg></LBL><div className="w-px" /><Field v={'0.0 "'} /><Chk className="ml-[7px]" />
            </div>
            <Sp />
            <div className="h-[23px] mt-[6px] shrink-0 flex items-center">
              <LBL><Q d="M1 1h4M3 0l2 1-2 1" /></LBL><div className="w-px" /><Field v="100.0 %" /><Chk className="ml-[7px]" />
              <LBR><Q d="M3 1v11M1 3l2-2 2 2M1 10l2 2 2-2" /></LBR><Field v="100.0 %" className="w-[75px]" /><Chk className="ml-[7px]" />
            </div>
            <div className="h-[23px] mt-[5px] shrink-0 flex items-center">
              <LBL><svg width="16" height="14" viewBox="0 0 16 14"><path d="M6 1h8M6 3.500h8M6 6h8M6 8.500h8M1 12h14" stroke="#555" /></svg></LBL><div className="w-px" /><Field v="0.0 %" /><Chk className="ml-[7px]" />
              <div className="ml-[9px] w-[94px] h-[23px] shrink-0 border border-[#a6a6a6] bg-[#ebebeb] flex items-center justify-between pl-[4px] pr-[4px] text-[#222] whitespace-nowrap"><span>% of Char. ...</span><Chev /></div>
              <Chk className="ml-[6px]" />
            </div>
            <Sp />
            <div className="h-[23px] mt-[6px] shrink-0 flex items-center">
              <LBL><svg width="16" height="15" viewBox="0 0 16 15"><path d="M0 11h16M0 13h16" stroke="#555" /><path d="M2 8a2.500 2.500 0 1 1 .1 0M5 4v6M11 1v9M11 8a2.500 2.500 0 1 0 0-4" stroke="#444" fill="none" /></svg></LBL><div className="w-px" /><Field v="0.0 %" /><Chk className="ml-[7px]" />
              <LBR><svg width="16" height="10" viewBox="0 0 16 10"><path d="M1 1l2 3M3 1 1 4M6 1l2 3M8 1 6 4M11 1l2 3M13 1l-2 3" stroke="#333" /><path d="M0 7h16M0 9h16" stroke="#555" /></svg></LBR><Field v="100.0 %" className="w-[75px]" /><Chk className="ml-[7px]" />
            </div>
            <div className="h-[23px] mt-[5px] shrink-0 flex items-center">
              <LBL><svg width="16" height="15" viewBox="0 0 16 15"><path d="M0 11h16M0 13h16M3 1 1 9M3 1l2 8M10 1v9M8 4h6v4H8Z" stroke="#444" fill="none" /></svg></LBL><div className="w-px" /><Field v="0.0 %" /><Chk className="ml-[7px]" />
            </div>
            <div className="h-[15px] mt-[7px] shrink-0 bg-[#e0e0e0] flex items-center justify-center pr-[2px]"><Tri s={8} /></div>
            <div className="h-[2px] mt-[6px] shrink-0 bg-[#999]" />
          </div>
          <div className="w-[18px] shrink-0 flex flex-col bg-[#f0f0f0] items-center">
            <div className="h-[18px] flex items-center shrink-0 rotate-180"><Chev /></div>
            <div className="w-[15px] h-[96px] mt-[119px] bg-[#cdcdcd] shrink-0" />
            <div className="flex-1" />
            <div className="h-[18px] flex items-center shrink-0"><Chev /></div>
          </div>
        </div>
      </div>
      <div className="w-[20px] shrink-0 flex flex-col bg-[#e4e4e4] text-[#111]">
        <VTab cls="h-[120px] bg-[#a9a9a9] pt-[3px]" icon={<svg width="16" height="15" viewBox="0 0 16 15"><path d="M2 14 6.500 3h3L14 14h-3l-1-2.500H6L5 14ZM6.500 9h3L8 5.500Z" fill="#f0f0f4" stroke="#333" /><path d="M0 2h3M13 2h3" stroke="#111" /></svg>} label="Text Properties" />
        <div className="flex-1 flex justify-center pt-[17px]"><IPlus s={19} /></div>
      </div>
    </div>
  </div>
);

const swatches = ["#222222", "#3f3f3f", "#555555", "#6b6b6b", "#808080", "#939393", "#a6a6a6", "#bbbbbb", "#cccccc", "#e0e0e0", "#ffffff", "#34278f", "#00aeef", "#00a651", "#fff200", "#ed1c24", "#ec008c", "#a83b82", "#f58220", "#f7a8a8", "#806a60", "#c5bfdf", "#9c8fc4", "#6e85bf", "#7566aa", "#7f7aa0", "#4a5a88", "#4f4570", "#647792", "#0090d8", "#8ad3f5", "#a0c0d4", "#82a0aa", "#627580", "#44525a", "#3f6a6a", "#347f70", "#5f9088", "#4aa590", "#4fa077", "#50c0cc", "#3ea0ad", "#a5c0ae", "#c4e4d0", "#98d4a8", "#839a89", "#8a9f70"];

const Palette = () => (
  <div className="w-[18px] shrink-0 bg-[#ebebeb] flex flex-col border-l border-[#d8d8d8] items-stretch overflow-hidden">
    <div className="h-[10px] shrink-0 flex items-center justify-center text-[#999] text-[9px] leading-none tracking-[1px]">···</div>
    <div className="h-[12px] shrink-0 flex items-center justify-center"><Tri dir="right" s={9} /></div>
    <div className="h-[20px] shrink-0 flex items-center justify-center"><Dropper /></div>
    <div className="h-[12px] shrink-0 flex items-center justify-center rotate-180"><Chev c="#d4d4d4" /></div>
    <div className="h-[17px] shrink-0 bg-white border border-[#666]"><svg width="16" height="15" viewBox="0 0 16 15"><path d="M0 0 16 15M16 0 0 15" stroke="#333" /></svg></div>
    {swatches.map((c, i) => <div key={i} className="h-[17px] shrink-0 border-t border-[#ffffff22]" style={{ background: c }} />)}
    <div className="h-[8px] shrink-0" />
    <div className="h-[16px] shrink-0 flex items-center justify-center"><Chev c="#c8c8c8" /></div>
    <div className="h-[16px] shrink-0 flex items-center justify-center rotate-90"><svg width="10" height="12" viewBox="0 0 12 10"><path d="M1 1l4 4-4 4M6 1l4 4-4 4" stroke="#c0c0c0" strokeWidth="1.500" fill="none" /></svg></div>
  </div>
);

export default function App() {
  return (
    <div className="h-[1052px] w-[1920px] overflow-hidden flex flex-col bg-[#ebebeb] text-[12px] leading-none text-[#1a1a1a] font-['Open_Sans','Liberation_Sans',sans-serif]">
      {/* Title bar */}
      <div className="h-[21px] shrink-0 bg-white flex items-center">
        <svg width="16" height="16" viewBox="0 0 16 16" className="ml-[3px]"><rect width="16" height="16" fill="#4ea33a" /><path d="M3 1c1 6 5 11 11 14C8 14 3 9 1 2Z" fill="#fff" /></svg>
        <span className="ml-[5px]">CorelDRAW X7 (64-Bit) - Untitled-1</span>
        <div className="flex-1" />
        <svg width="15" height="15" viewBox="0 0 15 15"><rect width="15" height="15" fill="#d0d0d0" /><circle cx="7.500" cy="5" r="3" fill="#c8411a" /><path d="M2 14c0-4 3-5 5.500-5S13 10 13 14Z" fill="#c8411a" /></svg>
        <div className="w-[11px] h-[3px] bg-[#111] ml-[24px] mt-[5px]" />
        <svg width="13" height="13" viewBox="0 0 13 13" className="ml-[17px]"><path d="M.750.750h8v8h-8ZM4.250 4.250h8v8h-8Z" fill="#fff" stroke="#111" strokeWidth="1.500" /></svg>
        <svg width="13" height="13" viewBox="0 0 13 13" className="ml-[15px] mr-[11px]"><path d="M1 1l11 11M12 1 1 12" stroke="#111" strokeWidth="1.800" /></svg>
      </div>
      {/* Menu */}
      <div className="h-[21px] shrink-0 bg-[#cfcfcf] flex items-center pl-[9px] text-[#111]">
        {menu.map(([a, u, b, w]) => <div key={a + u + b} className={`shrink-0 ${w}`}>{a}<span className="underline">{u}</span>{b}</div>)}
      </div>
      {/* Toolbar 1 */}
      <div className="h-[30px] shrink-0 flex items-center border-b border-[#cfcfcf]">
        <Slot><INew /></Slot><Slot><IOpen /></Slot><Slot><ISave /></Slot><Slot><IPrint /></Slot>
        <Sep className="h-[23px] ml-[4px]" />
        <Slot className="w-[28px] ml-[3px]"><ICut /></Slot><Slot><ICopy /></Slot><Slot><IPaste /></Slot>
        <Sep className="h-[23px] ml-[4px]" />
        <Slot className="w-[24px] ml-[5px]"><IUndo /></Slot><Slot className="w-[14px]"><Tri /></Slot>
        <Slot className="w-[24px] ml-[4px]"><IUndo c="#cccccc" flip /></Slot><Slot className="w-[14px] ml-[1px]"><Tri c="#bbb" /></Slot>
        <Sep className="h-[23px] ml-[6px]" />
        <Slot className="w-[28px] ml-[3px]"><ICorel /></Slot>
        <Sep className="h-[23px] ml-[3px]" />
        <Slot className="w-[28px] ml-[3px]"><IImp /></Slot><Slot><IImp alt /></Slot><Slot><IPdf /></Slot>
        <Sep className="h-[23px] ml-[4px]" />
        <div className="ml-[8px] w-[83px] h-[23px] border border-[#a6a6a6] bg-white flex items-center justify-between pl-[5px] pr-[4px] shrink-0"><span>43%</span><Chev /></div>
        <Slot className="w-[28px] ml-[3px]"><IFull /></Slot>
        <Sep className="h-[23px] ml-[4px]" />
        <Box className="ml-[6px] w-[22px]"><IRuler /></Box>
        <Slot className="w-[28px] ml-[3px]"><IGrid /></Slot>
        <Box className="ml-[2px] w-[22px]"><IGuide /></Box>
        <Sep className="h-[23px] ml-[6px]" />
        <span className="ml-[10px] w-[42px] shrink-0 whitespace-nowrap">Snap To</span>
        <Slot className="w-[10px] ml-[7px]"><Tri /></Slot>
        <Sep className="h-[23px] ml-[9px]" />
        <Slot className="w-[28px] ml-[2px]"><IApp /></Slot><Slot className="w-[28px] ml-[1px]"><ICheck /></Slot>
        <Sep className="h-[23px] ml-[4px]" />
        <Slot className="w-[28px] ml-[3px]"><IFlash /></Slot><Slot className="w-[12px] ml-[-1px]"><Tri /></Slot>
        <div className="w-[4px] h-[25px] bg-white ml-[4px] shrink-0" />
        <Slot className="w-[28px] ml-[1px]"><IPin /></Slot>
        <Sep className="h-[23px] ml-[3px]" />
        <Slot className="w-[28px] ml-[4px]"><IPlay /></Slot><Slot className="w-[28px] ml-[1px]"><IMacro /></Slot><Slot className="w-[26px]"><ITri /></Slot>
        <Sep className="h-[23px] ml-[4px]" />
        <Slot className="w-[28px] ml-[3px]"><IRec /></Slot><Slot><IPause /></Slot><Slot><IStop /></Slot>
      </div>
      {/* Toolbar 2 */}
      <div className="h-[41px] shrink-0 flex items-center border-b border-[#cfcfcf]">
        <div className="ml-[3px] w-[157px] h-[24px] border border-[#a6a6a6] bg-[#ebebeb] flex items-center justify-between pl-[4px] pr-[4px] shrink-0"><span>Custom</span><Chev /></div>
        <div className="ml-[8px] w-[15px] h-[32px] flex flex-col justify-between shrink-0">
          <svg width="14" height="15" viewBox="0 0 14 15"><path d="M2 .500h10M7 .500v2" stroke="#333" /><rect x="2.500" y="3.500" width="9" height="11" fill="#e8e8ee" stroke="#555" /></svg>
          <svg width="14" height="15" viewBox="0 0 14 15"><path d="M2 1v13M.500 2.500 2 1l1.500 1.500M.500 12.500 2 14l1.500-1.500" stroke="#333" /><rect x="4.500" y="3.500" width="9" height="9" fill="#e8e8ee" stroke="#555" /></svg>
        </div>
        <Double a={'47.0 "'} b={'19.0 "'} />
        <Sep className="ml-[6px] h-[30px]" />
        <Slot className="w-[22px] ml-[6px]"><svg width="10" height="17" viewBox="0 0 10 17"><rect x=".500" y=".500" width="9" height="16" fill="#f0f0f4" stroke="#555" /><rect x="1" y="9" width="8" height="7" fill="#d4d4de" /></svg></Slot>
        <Box className="ml-[6px] w-[23px]"><svg width="17" height="11" viewBox="0 0 17 11"><rect x=".500" y=".500" width="16" height="10" fill="#f0f0f4" stroke="#555" /><rect x="1" y="6" width="15" height="4" fill="#d4d4de" /></svg></Box>
        <Sep className="ml-[7px] h-[30px]" />
        <Slot className="w-[22px] ml-[5px]"><svg width="16" height="17" viewBox="0 0 16 17"><rect x=".500" y=".500" width="8" height="11" fill="#f2f2f4" stroke="#556" /><rect x="4.500" y="3.500" width="8" height="11" fill="#f2f2f4" stroke="#556" /></svg></Slot>
        <Box className="ml-[6px]"><svg width="17" height="14" viewBox="0 0 17 14"><rect x=".500" y=".500" width="3" height="13" fill="#eee" stroke="#556" /><rect x="6.500" y="7.500" width="4" height="6" fill="#eee" stroke="#556" /><rect x="13" y="5.500" width="3" height="8" fill="#eee" stroke="#556" /></svg></Box>
        <Sep className="ml-[6px] h-[30px]" />
        <span className="ml-[9px] w-[28px] shrink-0 whitespace-nowrap">Units:</span>
        <div className="ml-[3px] w-[90px] h-[24px] border border-[#a6a6a6] bg-[#ebebeb] flex items-center justify-between pl-[4px] pr-[4px] shrink-0"><span>inches</span><Chev /></div>
        <Sep className="ml-[6px] h-[30px]" />
        <Slot className="w-[14px] ml-[9px]"><svg width="14" height="14" viewBox="0 0 14 14"><path d="M7 0 4.500 3h5ZM7 14l-2.500-3h5ZM0 7l3-2.500v5ZM14 7l-3-2.500v5Z" fill="#333" /><rect x="4" y="4" width="6" height="6" fill="#dde" stroke="#556" /></svg></Slot>
        <div className="ml-[2px] w-[77px] h-[24px] border border-[#a6a6a6] bg-white flex items-center justify-between pl-[2px] shrink-0">
          <span>0.01 "</span>
          <div className="w-[11px] h-full flex flex-col border-l border-[#a6a6a6] bg-[#eee]"><div className="flex-1 flex items-center justify-center border-b border-[#a6a6a6]"><Tri dir="up" s={6} /></div><div className="flex-1 flex items-center justify-center"><Tri s={6} /></div></div>
        </div>
        <Sep className="ml-[7px] h-[30px]" />
        <div className="ml-[8px] w-[15px] h-[32px] flex flex-col justify-between shrink-0">
          <svg width="15" height="15" viewBox="0 0 15 15"><rect x=".500" y=".500" width="6" height="6" fill="#eee" stroke="#444" /><rect x="3.500" y="3.500" width="6" height="6" fill="#eee" stroke="#444" /><path d="M10 10l4 4M14 10l-4 4" stroke="#333" /></svg>
          <svg width="15" height="15" viewBox="0 0 15 15"><rect x=".500" y=".500" width="6" height="6" fill="#eee" stroke="#444" /><rect x="3.500" y="3.500" width="6" height="6" fill="#eee" stroke="#444" /><path d="M10 10l2 2 2-2M12 12v3" stroke="#333" /></svg>
        </div>
        <Double a={'0.25 "'} b={'0.25 "'} className="ml-[1px]" />
        <Box className="ml-[13px]"><svg width="17" height="17" viewBox="0 0 17 17"><rect x="2.500" y="2.500" width="10" height="10" fill="#e4e4ea" stroke="#444" strokeDasharray="2 1.500" /><path d="M10 8l1 8 2-2 3 0Z" fill="#fff" stroke="#556" /></svg></Box>
        <Sep className="ml-[6px] h-[30px]" />
        <Slot className="w-[20px] ml-[14px]"><IPlus /></Slot>
        <div className="w-[4px] h-[36px] bg-white ml-[6px] shrink-0" />
        <Box className="ml-[2px] w-[23px]"><svg width="17" height="17" viewBox="0 0 17 17"><rect x="2.500" y="2.500" width="10" height="10" fill="#e4e4ea" stroke="#444" strokeDasharray="2 1.500" /><path d="M10 8l1 8 2-2 3 0Z" fill="#fff" stroke="#556" /></svg></Box>
        <Box className="ml-[5px]"><svg width="17" height="17" viewBox="0 0 17 17"><rect x="7" y="4" width="5" height="8" fill="#dde" stroke="#444" /><path d="M1 8h5M4 6l2 2-2 2" stroke="#111" /><path d="M14 1v15" stroke="#222" strokeDasharray="1 1" /></svg></Box>
      </div>
      {/* Main */}
      <div className="flex-1 min-h-0 flex items-stretch">
        <Toolbox />
        <div className="w-[1595px] shrink-0 flex flex-col">
          <Tabs />
          <div className="h-[19px] shrink-0 bg-[#ebebeb] border-b border-[#8a8a8a]"><HRuler /></div>
          <div className="flex-1 min-h-0 flex">
            <div className="w-[18px] shrink-0 bg-[#ebebeb]"><VRuler /></div>
            <div className="flex-1 min-w-0 flex flex-col">
              <div className="flex-1 min-h-0 flex">
                <div className="relative flex-1 bg-white overflow-hidden">
                  <div className="w-[1076px] h-[669px] bg-white border-l border-[#777] border-r-[6px] border-r-[#c0c0c0] border-b-[5px] border-b-[#c0c0c0]" />
                  <Logo />
                  <Dialog />
                </div>
                <div className="w-[17px] shrink-0 bg-white flex flex-col">
                  <div className="h-[290px] shrink-0" />
                  <div className="h-[376px] shrink-0 bg-[#cdcdcd]" />
                  <div className="flex-1" />
                  <div className="h-[16px] shrink-0 bg-[#f0f0f0] flex items-center justify-center"><Chev /></div>
                </div>
              </div>
              <NavBar />
            </div>
          </div>
          <PaletteBar />
        </div>
        <div className="w-[3px] shrink-0 bg-white" />
        <div className="w-[2px] shrink-0" />
        <div className="w-[272px] shrink-0 flex flex-col">
          <ObjectPanel />
          <div className="h-[4px] shrink-0 bg-white" />
          <TextPanel />
        </div>
        <Palette />
      </div>
      {/* Status */}
      <div className="h-[34px] shrink-0 flex items-center bg-[#ebebeb] border-t border-[#d2d2d2] text-[12.500px]">
        <span className="ml-[6px] w-[94px] whitespace-nowrap text-[#333] text-[11px]">( 23.373, 15.981 )</span>
        <div className="w-[14px] h-[14px] border border-[#111] flex items-center justify-center"><Tri dir="right" s={9} /></div>
        <div className="flex-1" />
        <svg width="15" height="15" viewBox="0 0 15 15"><rect x=".500" y=".500" width="14" height="11" fill="#8a96b4" stroke="#667" /><circle cx="7.500" cy="6" r="3" fill="#eee" stroke="#444" /><path d="M4 14h7" stroke="#667" strokeWidth="1.500" /></svg>
        <svg width="16" height="16" viewBox="0 0 16 16" className="ml-[14px]"><path d="M1 7 7 1l7 7-4 5H4Z" fill="#eee" stroke="#333" /><path d="M2 9h11l-3 5H5Z" fill="#ea7a10" /></svg>
        <div className="w-[17px] h-[17px] border border-[#555] bg-white ml-[7px]"><svg width="15" height="15" viewBox="0 0 15 15"><path d="M0 0 15 15M15 0 0 15" stroke="#222" /></svg></div>
        <span className="ml-[5px] w-[160px]">None</span>
        <div className="w-px h-[24px] bg-[#d0d0d0]" />
        <svg width="10" height="15" viewBox="0 0 10 15" className="ml-[9px]"><path d="M5 1 8 6 7 11H3L2 6Z" fill="#eee" stroke="#555" /><path d="M2 13h6" stroke="#555" strokeWidth="1.500" /></svg>
        <div className="w-[17px] h-[17px] bg-[#222] ml-[9px] border border-[#666]" />
        <span className="ml-[4px] w-[173px] whitespace-pre">C:0 M:0 Y:0 K:100  0.500 pt</span>
      </div>
      {/* Taskbar edge */}
      <div className="h-[2px] shrink-0 flex bg-[#54707e]">
        <div className="w-[40px] shrink-0" />
        {["bg-[#a9b4ba]", "bg-[#f4f4f4]", "bg-[#a9b4ba]", "bg-[#a9b4ba]", "bg-[#a9b4ba]", "bg-[#a9b4ba]", "bg-[#a9b4ba]", "bg-[#a9b4ba]"].map((c, i) => <div key={i} className={`w-[160px] mr-[2px] shrink-0 ${c}`} />)}
        <div className="w-[160px] shrink-0" />
        <div className="w-[39px] shrink-0 bg-[#39454c]" />
      </div>
    </div>
  );
}
